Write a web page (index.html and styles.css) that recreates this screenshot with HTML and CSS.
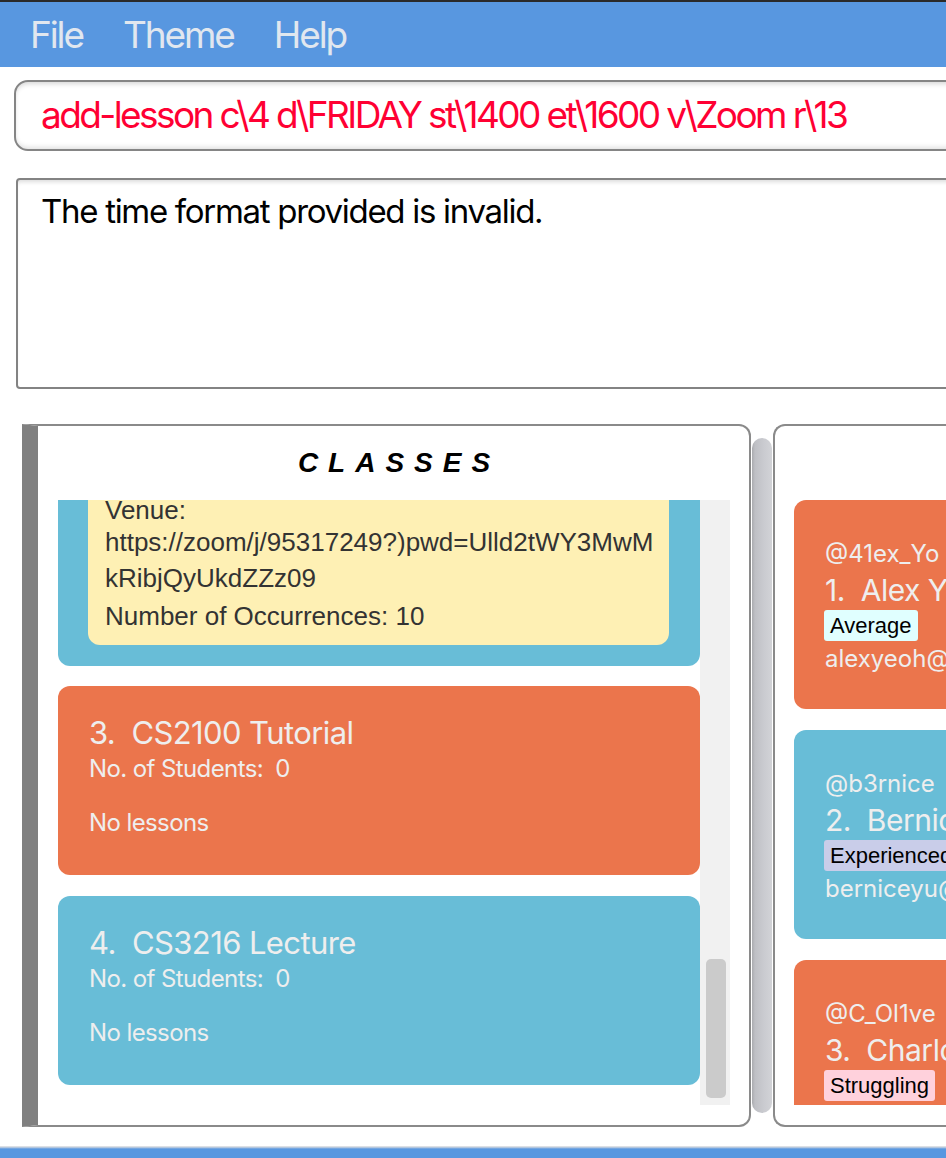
FILE: index.html
```html
<!DOCTYPE html>
<html>
<head>
<meta charset="utf-8">
<link rel="stylesheet" href="styles.css">
</head>
<body>
<div class="app">
  <div class="topline"></div>
  <nav class="menubar">
    <span class="menu-item">File</span>
    <span class="menu-item">Theme</span>
    <span class="menu-item">Help</span>
  </nav>
  <div class="command">add-lesson c\4 d\FRIDAY st\1400 et\1600 v\Zoom r\13</div>
  <div class="result">The time format provided is invalid.</div>
  <div class="panels">
    <section class="classes">
      <h2 class="panel-title">CLASSES</h2>
      <div class="list-wrap">
        <div class="list">
          <div class="card blue clipped">
            <div class="lesson">
              <div class="l-venue">Venue:</div>
              <div class="l-url"><span class="url-line">https://zoom/j/95317249?)pwd=Ulld2tWY3MwM</span><span class="url-line">kRibjQyUkdZZz09</span></div>
              <div class="l-occ">Number of Occurrences: 10</div>
            </div>
          </div>
          <div class="card orange">
            <div class="c-title">3.  CS2100 Tutorial</div>
            <div class="c-sub">No. of Students:  0</div>
            <div class="c-none">No lessons</div>
          </div>
          <div class="card blue">
            <div class="c-title">4.  CS3216 Lecture</div>
            <div class="c-sub">No. of Students:  0</div>
            <div class="c-none">No lessons</div>
          </div>
        </div>
        <div class="scrollbar"><div class="thumb"></div></div>
      </div>
    </section>
    <div class="divider"></div>
    <section class="students">
      <div class="slist">
        <div class="scard orange">
          <div class="s-handle">@41ex_Yo</div>
          <div class="s-name">1.  Alex Yeoh</div>
          <div class="tag tag-avg">Average</div>
          <div class="s-email">alexyeoh@example.com</div>
        </div>
        <div class="scard blue">
          <div class="s-handle">@b3rnice</div>
          <div class="s-name">2.  Bernice Yu</div>
          <div class="tag tag-exp">Experienced</div>
          <div class="s-email">berniceyu@example.com</div>
        </div>
        <div class="scard orange">
          <div class="s-handle">@C_Ol1ve</div>
          <div class="s-name">3.  Charlotte Oliveiro</div>
          <div class="tag tag-str">Struggling</div>
          <div class="s-email">charlotte@example.com</div>
        </div>
      </div>
    </section>
  </div>
  <div class="statusbar"></div>
</div>
</body>
</html>
```

FILE: styles.css
```css
html, body {
  margin: 0;
  padding: 0;
  background: #ffffff;
  overflow: hidden;
}
.app {
  width: 1400px;
  height: 1158px;
  font-family: "Inter", "Liberation Sans", sans-serif;
}
.topline {
  height: 2px;
  background: #2a2a2a;
}
.menubar {
  height: 65px;
  background: #5897e0;
  display: flex;
  align-items: center;
  padding-left: 30px;
  gap: 40px;
}
.menu-item {
  font-size: 37px;
  letter-spacing: -2.1px;
  color: #e1e7ef;
}
.command {
  box-sizing: border-box;
  margin: 13px 0 0 14px;
  width: 1200px;
  height: 71px;
  border: 2px solid #858585;
  border-radius: 14px;
  box-shadow: inset 0 4px 5px -2px rgba(0,0,0,0.16), inset 0 -4px 5px -2px rgba(0,0,0,0.12);
  display: flex;
  align-items: center;
  padding-left: 25px;
  padding-bottom: 2px;
  font-size: 37px;
  letter-spacing: -2.6px;
  color: #ff0033;
  white-space: pre;
}
.result {
  box-sizing: border-box;
  margin: 27px 0 0 16px;
  width: 1200px;
  height: 211px;
  border: 2px solid #838383;
  border-radius: 4px;
  box-shadow: inset 0 4px 4px -2px rgba(0,0,0,0.14);
  padding: 11px 0 0 23px;
  font-size: 33px;
  letter-spacing: -1.3px;
  color: #000000;
}
.panels {
  display: flex;
  margin: 35px 0 0 22px;
  height: 703px;
}
.classes {
  box-sizing: border-box;
  width: 729px;
  height: 703px;
  border: 2px solid #8a8a8a;
  border-left: 16px solid #808080;
  border-radius: 0 12px 12px 0;
  padding: 0 19px 0 20px;
  display: flex;
  flex-direction: column;
}
.panel-title {
  margin: 0;
  height: 74px;
  display: flex;
  align-items: center;
  justify-content: center;
  padding-left: 10px;
  font-family: "Liberation Sans", Arial, sans-serif;
  font-style: italic;
  font-weight: bold;
  font-size: 28px;
  letter-spacing: 10px;
  color: #000000;
}
.list-wrap {
  display: flex;
  height: 605px;
}
.list {
  width: 642px;
  overflow: hidden;
  display: flex;
  flex-direction: column;
  gap: 20px;
}
.scrollbar {
  width: 30px;
  background: #f1f1f1;
  display: flex;
  flex-direction: column;
  justify-content: flex-end;
  padding: 0 4px 7px 6px;
  box-sizing: border-box;
}
.thumb {
  height: 139px;
  background: #cbcbcb;
  border-radius: 5px;
}
.card {
  flex: none;
  box-sizing: border-box;
  border-radius: 12px;
  padding: 28px 30px 37px 31px;
  color: #eeeeee;
}
.orange { background: #eb754c; }
.blue { background: #68bdd7; }
.card.clipped {
  border-radius: 0 0 12px 12px;
  padding: 0 31px 21px 30px;
}
.card.blue:last-child { margin-top: 1px; }
.lesson {
  background: #fef0b4;
  border-radius: 0 0 12px 12px;
  padding: 0 10px 11px 17px;
  font-family: "Liberation Sans", Arial, sans-serif;
  font-size: 26px;
  color: #333333;
}
.l-venue {
  line-height: 20px;
}
.l-url {
  margin-top: 4px;
  line-height: 36px;
}
.url-line {
  display: block;
  white-space: nowrap;
}
.l-occ {
  margin-top: 2px;
  line-height: 36px;
}
.c-title {
  font-size: 31px;
  line-height: 38px;
  letter-spacing: -0.6px;
  white-space: pre;
}
.c-sub {
  margin-top: 2px;
  font-size: 24px;
  line-height: 30px;
  letter-spacing: -0.6px;
  white-space: pre;
}
.c-none {
  margin-top: 24px;
  font-size: 24px;
  line-height: 30px;
  letter-spacing: -0.6px;
}
.divider {
  width: 20px;
  margin: 14px 1px 14px 1px;
  border-radius: 10px;
  background: linear-gradient(to right, #a9aaae 0, #bfc0c5 3px, #cacbd0 60%, #d2d3d7 100%);
}
.students {
  box-sizing: border-box;
  width: 600px;
  height: 703px;
  border: 2px solid #8a8a8a;
  border-right: none;
  border-radius: 12px 0 0 12px;
  padding: 74px 0 0 19px;
}
.slist {
  height: 605px;
  overflow: hidden;
  display: flex;
  flex-direction: column;
  gap: 21px;
}
.scard {
  flex: none;
  box-sizing: border-box;
  height: 209px;
  border-radius: 12px;
  padding: 40px 0 0 31px;
  color: #eeeeee;
  white-space: nowrap;
}
.s-handle {
  font-size: 24px;
  line-height: 28px;
  letter-spacing: 0;
}
.s-name {
  margin-top: 4px;
  font-size: 30px;
  line-height: 36px;
  letter-spacing: -0.5px;
  white-space: pre;
}
.tag {
  display: inline-block;
  margin: 2px 0 0 -1px;
  height: 31px;
  line-height: 31px;
  padding: 0 6px;
  border-radius: 3px;
  font-family: "Liberation Sans", Arial, sans-serif;
  font-size: 22px;
  color: #000000;
}
.tag-avg { background: #e0ffff; }
.tag-exp { background: #c9cde9; }
.tag-str { background: #ffd1dc; }
.s-email {
  margin-top: 4px;
  font-size: 24px;
  line-height: 28px;
  letter-spacing: 0;
}
.statusbar {
  margin-top: 19px;
  height: 14px;
  background: linear-gradient(#e8e8e8 0, #cfd6e0 1px, #5897e0 3px);
}
```
